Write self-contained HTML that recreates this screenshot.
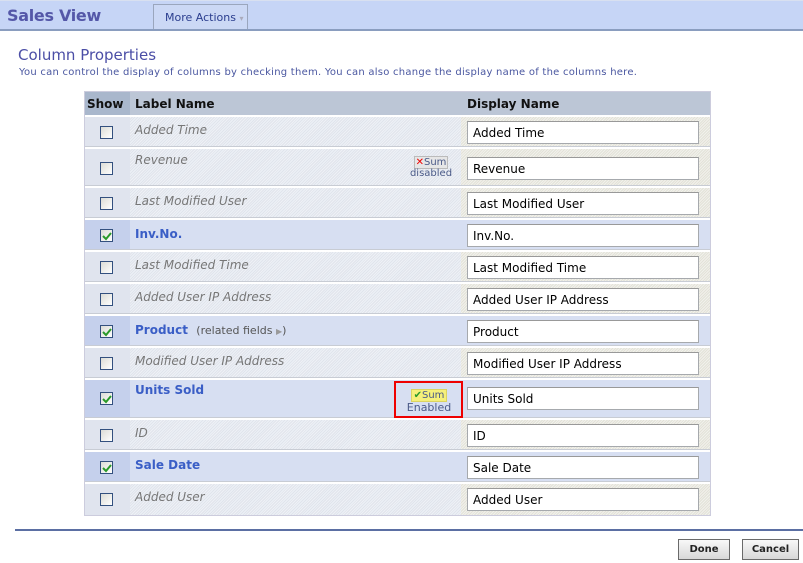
<!DOCTYPE html>
<html><head><style>
*{margin:0;padding:0;box-sizing:border-box}
body{width:803px;height:563px;background:#fff;font-family:Verdana,"DejaVu Sans",sans-serif;position:relative;overflow:hidden}
.top{position:absolute;left:0;top:0;width:803px;height:31px;background:#c6d5f6;border-top:1px solid #d8e0f0;border-bottom:2px solid #8a9dbf}
.title{position:absolute;left:7px;top:5px;font-size:16px;font-weight:bold;color:#5457a8;font-family:"DejaVu Sans",sans-serif;letter-spacing:-0.3px}
.ma{position:absolute;left:153px;top:3px;width:95px;height:25px;border:1px solid #9aa6bd;border-bottom:none;background:#cbd8f5;font-size:11px;color:#2a3d8e;padding:6px 0 0 11px}
.ma span{color:#aab;font-size:8px}
h1{position:absolute;left:18px;top:46px;font-size:15px;font-weight:normal;color:#4b4ea6}
.sub{position:absolute;left:19px;top:67px;font-size:10px;color:#4a57a0;letter-spacing:0.25px}
.tbl{position:absolute;left:84px;top:91px;width:627px;height:425px;border:1px solid #ccd;background:#fff}
.hd{position:absolute;left:0;top:0;width:625px;height:24px;background:#bcc6d6;font-size:12px;font-weight:bold;color:#111}
.hd .s{position:absolute;left:0;top:0;width:45px;height:24px;background:#a9b7cc;padding:5px 0 0 2px}
.row{position:absolute;left:0;width:625px;border-top:2px solid #fff;border-bottom:1px solid #c8ccd4}
.un{background:repeating-linear-gradient(135deg,#eef1f6 0 1px,#e0e4ec 1px 2px)}
.un .d{position:absolute;left:376px;top:0;bottom:0;width:249px;background:repeating-linear-gradient(135deg,#f1f1ec 0 1px,#e3e2d8 1px 2px)}
.un .sc{position:absolute;left:0;top:0;bottom:0;width:45px;background:#e0e4ee}
.ch{background:#d7dff2}
.ch .sc{position:absolute;left:0;top:0;bottom:0;width:45px;background:#c5d0ec}
.cb{position:absolute;left:15px;width:13px;height:13px;border:1px solid #33507f;background:linear-gradient(135deg,#dcdcd6,#fff)}
.cb svg{position:absolute;left:1px;top:1px}
.lab{position:absolute;left:50px;font-size:12px;color:#777;font-style:italic}
.lb{position:absolute;left:50px;font-size:12px;color:#3a5ec6;font-weight:bold;font-style:normal}
.rf{font-weight:normal;color:#555;font-size:11px}
.in{position:absolute;left:382px;width:232px;height:23px;border:1px solid #a6a9ad;border-top-color:#999;background:#fff;font-size:12px;color:#000;padding:4px 0 0 5px}
.sum{position:absolute;font-size:10px;color:#4a5a88;text-align:center}
.btn{position:absolute;top:539px;height:21px;border:1px solid #6a6a6a;background:linear-gradient(#f8f8f8,#d8d8d8);font-size:10px;font-weight:bold;color:#222;text-align:center;padding-top:4px}
</style></head><body>
<div class="top"><div class="title">Sales View</div><div class="ma">More Actions <span>▾</span></div></div>
<h1>Column Properties</h1>
<div class="sub">You can control the display of columns by checking them. You can also change the display name of the columns here.</div>
<div class="tbl">
<div class="hd"><div class="s">Show</div><span style="position:absolute;left:50px;top:5px">Label Name</span><span style="position:absolute;left:382px;top:5px">Display Name</span></div>

<div class="row un" style="top:23px;height:32px"><div class="sc"></div><div class="d"></div><div class="cb" style="top:9px"></div><div class="lab" style="top:6px">Added Time</div><div class="in" style="top:4px">Added Time</div></div>

<div class="row un" style="top:55px;height:39px"><div class="sc"></div><div class="d"></div><div class="cb" style="top:13px"></div><div class="lab" style="top:4px">Revenue</div>
<div class="sum" style="left:322px;top:8px;width:48px"><span style="background:#e6e6e6;border:1px solid #bbb;padding:0 1px"><b style="color:#e00">✕</b>Sum</span><br>disabled</div>
<div class="in" style="top:8px">Revenue</div></div>

<div class="row un" style="top:94px;height:32px"><div class="sc"></div><div class="d"></div><div class="cb" style="top:9px"></div><div class="lab" style="top:6px">Last Modified User</div><div class="in" style="top:4px">Last Modified User</div></div>

<div class="row ch" style="top:126px;height:32px"><div class="sc"></div><div class="cb" style="top:9px"><svg width="10" height="10"><path d="M1 5 L4 8 L9 2" stroke="#2a9a2a" stroke-width="2" fill="none"/></svg></div><div class="lb" style="top:7px">Inv.No.</div><div class="in" style="top:4px">Inv.No.</div></div>

<div class="row un" style="top:158px;height:32px"><div class="sc"></div><div class="d"></div><div class="cb" style="top:9px"></div><div class="lab" style="top:6px">Last Modified Time</div><div class="in" style="top:4px">Last Modified Time</div></div>

<div class="row un" style="top:190px;height:32px"><div class="sc"></div><div class="d"></div><div class="cb" style="top:9px"></div><div class="lab" style="top:6px">Added User IP Address</div><div class="in" style="top:4px">Added User IP Address</div></div>

<div class="row ch" style="top:222px;height:32px"><div class="sc"></div><div class="cb" style="top:9px"><svg width="10" height="10"><path d="M1 5 L4 8 L9 2" stroke="#2a9a2a" stroke-width="2" fill="none"/></svg></div><div class="lb" style="top:7px">Product &nbsp;<span class="rf">(related fields <span style="color:#999;font-size:8px">▶</span>)</span></div><div class="in" style="top:4px">Product</div></div>

<div class="row un" style="top:254px;height:32px"><div class="sc"></div><div class="d"></div><div class="cb" style="top:9px"></div><div class="lab" style="top:6px">Modified User IP Address</div><div class="in" style="top:4px">Modified User IP Address</div></div>

<div class="row ch" style="top:286px;height:40px"><div class="sc"></div><div class="cb" style="top:12px"><svg width="10" height="10"><path d="M1 5 L4 8 L9 2" stroke="#2a9a2a" stroke-width="2" fill="none"/></svg></div><div class="lb" style="top:3px">Units Sold</div>
<div style="position:absolute;left:309px;top:1px;width:69px;height:37px;border:2px solid #e00"></div>
<div class="sum" style="left:318px;top:8px;width:52px;font-size:11px"><span style="background:#f5f07a;border:1px solid #dcd460;padding:0 2px;font-size:10px"><b style="color:#2a9a2a">✔</b>Sum</span><br>Enabled</div>
<div class="in" style="top:7px">Units Sold</div></div>

<div class="row un" style="top:326px;height:32px"><div class="sc"></div><div class="d"></div><div class="cb" style="top:9px"></div><div class="lab" style="top:6px">ID</div><div class="in" style="top:4px">ID</div></div>

<div class="row ch" style="top:358px;height:32px"><div class="sc"></div><div class="cb" style="top:9px"><svg width="10" height="10"><path d="M1 5 L4 8 L9 2" stroke="#2a9a2a" stroke-width="2" fill="none"/></svg></div><div class="lb" style="top:6px">Sale Date</div><div class="in" style="top:4px">Sale Date</div></div>

<div class="row un" style="top:390px;height:33px;border-bottom:none"><div class="sc"></div><div class="d"></div><div class="cb" style="top:9px"></div><div class="lab" style="top:6px">Added User</div><div class="in" style="top:4px">Added User</div></div>
</div>
<div style="position:absolute;left:15px;top:529px;width:788px;height:2px;background:#5b6fa3"></div>
<div class="btn" style="left:678px;width:52px">Done</div>
<div class="btn" style="left:742px;width:57px">Cancel</div>
</body></html>
